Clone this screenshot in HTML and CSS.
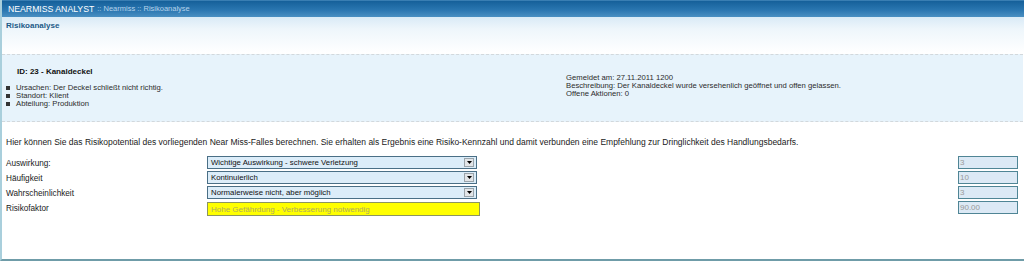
FILE: index.html
```html
<!DOCTYPE html>
<html lang="de">
<head>
<meta charset="utf-8">
<title>Risikoanalyse</title>
<link rel="stylesheet" href="styles.css">
</head>
<body>
<div class="page">
  <header class="topbar">
    <span class="brand">NEARMISS ANALYST</span>
    <span class="crumbs">:: Nearmiss :: Risikoanalyse</span>
  </header>
  <div class="subhead">
    <h1 class="title">Risikoanalyse</h1>
  </div>
  <section class="infobox">
    <div class="info-left">
      <div class="info-id">ID: 23 - Kanaldeckel</div>
      <ul class="info-list">
        <li>Ursachen: Der Deckel schließt nicht richtig.</li>
        <li>Standort: Klient</li>
        <li>Abteilung: Produktion</li>
      </ul>
    </div>
    <div class="info-right">
      <div>Gemeldet am: 27.11.2011 1200</div>
      <div>Beschreibung: Der Kanaldeckel wurde versehenlich geöffnet und offen gelassen.</div>
      <div>Offene Aktionen: 0</div>
    </div>
  </section>
  <p class="intro">Hier können Sie das Risikopotential des vorliegenden Near Miss-Falles berechnen. Sie erhalten als Ergebnis eine Risiko-Kennzahl und damit verbunden eine Empfehlung zur Dringlichkeit des Handlungsbedarfs.</p>
  <form class="form">
    <label class="lbl">Auswirkung:</label>
    <div class="sel"><span class="sel-text">Wichtige Auswirkung - schwere Verletzung</span><span class="sel-btn"><svg width="5" height="3" viewBox="0 0 5 3"><path d="M0 0H5L2.5 3Z" fill="#000"/></svg></span></div>
    <div class="spacer"></div>
    <div class="num">3</div>

    <label class="lbl">Häufigkeit</label>
    <div class="sel"><span class="sel-text">Kontinuierlich</span><span class="sel-btn"><svg width="5" height="3" viewBox="0 0 5 3"><path d="M0 0H5L2.5 3Z" fill="#000"/></svg></span></div>
    <div class="spacer"></div>
    <div class="num">10</div>

    <label class="lbl">Wahrscheinlichkeit</label>
    <div class="sel"><span class="sel-text">Normalerweise nicht, aber möglich</span><span class="sel-btn"><svg width="5" height="3" viewBox="0 0 5 3"><path d="M0 0H5L2.5 3Z" fill="#000"/></svg></span></div>
    <div class="spacer"></div>
    <div class="num">3</div>

    <label class="lbl">Risikofaktor</label>
    <div class="result">Hohe Gefährdung - Verbesserung notwendig</div>
    <div class="spacer"></div>
    <div class="num">90.00</div>
  </form>
</div>
</body>
</html>
```

FILE: styles.css
```css
html, body {
  margin: 0;
  padding: 0;
  background: #ffffff;
}
body {
  font-family: "Liberation Sans", Arial, sans-serif;
  color: #1a1a1a;
}
.page {
  width: 1024px;
  height: 261px;
  box-sizing: border-box;
  border-left: 2px solid #a9cfdc;
  border-bottom: 2px solid #6f9ca8;
  display: flex;
  flex-direction: column;
}
.topbar {
  height: 17px;
  box-sizing: border-box;
  padding-left: 6px;
  display: flex;
  align-items: center;
  gap: 3px;
  background: linear-gradient(#5d9ccb 0px, #15609a 1px, #2a76b0 10px, #4a8fc2 17px);
}
.brand {
  color: #ffffff;
  font-size: 8.7px;
}
.crumbs {
  color: #b5d2ea;
  font-size: 7.5px;
}
.subhead {
  height: 37px;
  box-sizing: border-box;
  padding: 4px 0 0 4px;
  background: linear-gradient(#d9eaf6 0px, #eef6fb 12px, #ffffff 36px);
}
.title {
  margin: 0;
  font-size: 8px;
  font-weight: bold;
  color: #1d5a87;
}
.infobox {
  height: 68px;
  box-sizing: border-box;
  margin-right: 1px;
  background: #e7f3fb;
  border-top: 1px dashed #d2d8dc;
  border-bottom: 1px dashed #d2d8dc;
  display: flex;
  font-size: 7.7px;
  color: #2b2b2b;
  line-height: 8px;
}
.info-left {
  width: 564px;
  padding: 13px 0 0 4px;
  box-sizing: border-box;
}
.info-id {
  font-weight: bold;
  font-size: 8px;
  color: #111;
  padding-left: 11px;
  margin-bottom: 8px;
}
.info-list {
  margin: 0;
  padding: 0;
  list-style: none;
}
.info-list li {
  display: flex;
  align-items: center;
  gap: 6px;
}
.info-list li::before {
  content: "";
  width: 4px;
  height: 4px;
  background: #333;
}
.info-right {
  padding-top: 19px;
}
.intro {
  margin: 16px 0 0 4px;
  font-size: 8.5px;
  line-height: 8px;
  color: #1a1a1a;
}
.form {
  margin: 10px 0 0 4px;
  display: grid;
  grid-template-columns: 201px 273px 1fr 60px;
  grid-auto-rows: 13px;
  row-gap: 2px;
  align-items: center;
  padding-right: 6px;
  font-size: 8.2px;
}
.lbl {
  color: #1a1a1a;
  padding-top: 1px;
}
.sel {
  position: relative;
  height: 13px;
  width: 270px;
  box-sizing: border-box;
  border: 1px solid #4a6f86;
  background: #dcedf9;
  display: flex;
  align-items: center;
  padding-left: 3px;
  font-size: 7.8px;
  color: #111;
}
.sel-btn {
  position: absolute;
  right: 2px;
  top: 1px;
  width: 10px;
  height: 9px;
  box-sizing: border-box;
  border: 1px solid #9aa4ab;
  background: #e2e5e8;
  display: flex;
  align-items: center;
  justify-content: center;
}
.result {
  height: 14px;
  width: 273px;
  box-sizing: border-box;
  border: 1px solid #8c9560;
  background: #ffff00;
  color: #aeab62;
  font-size: 8px;
  padding-left: 3px;
  display: flex;
  align-items: center;
  align-self: start;
  margin-top: 1px;
}
.num {
  height: 13px;
  box-sizing: border-box;
  border: 1px solid #4f8595;
  background: #dce9f5;
  color: #9a9a9a;
  font-size: 8px;
  padding-left: 1px;
  display: flex;
  align-items: center;
}
```
